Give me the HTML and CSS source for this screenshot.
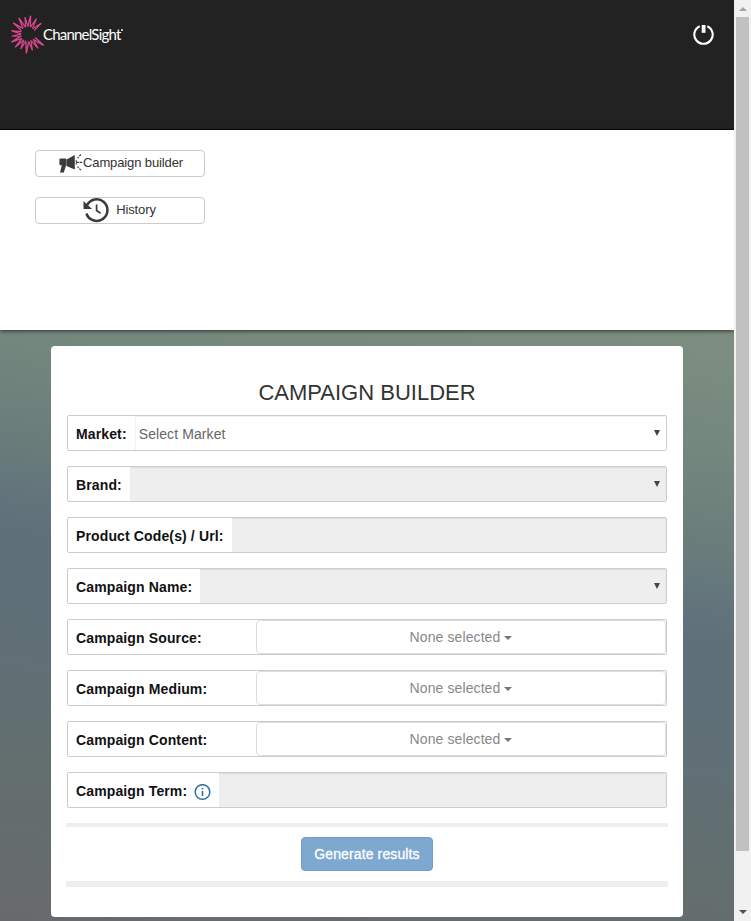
FILE: index.html
```
<!DOCTYPE html>
<html lang="en">
<head>
<meta charset="utf-8">
<title>Campaign builder</title>
<link rel="stylesheet" href="styles.css">
</head>
<body>
<div class="page">
  <header class="topbar">
    <div class="logo">
      <svg class="burst" width="42" height="42" viewBox="-20 -20 42 42">
        <defs><path id="ray" d="M-1.3-7.5L0-18.5L1.3-7.5"/></defs>
        <g fill="none" stroke="#d9468c" stroke-width="1.3">
          <use href="#ray" transform="rotate(8)"/>
          <use href="#ray" transform="rotate(29) scale(.95)"/>
          <use href="#ray" transform="rotate(51) scale(.92)"/>
          <use href="#ray" transform="rotate(126) scale(1.04)"/>
          <use href="#ray" transform="rotate(145) scale(.95)"/>
          <use href="#ray" transform="rotate(165) scale(.92)"/>
          <use href="#ray" transform="rotate(185) scale(1.05)"/>
          <use href="#ray" transform="rotate(206) scale(.9)"/>
          <use href="#ray" transform="rotate(224)"/>
          <use href="#ray" transform="rotate(244)"/>
          <use href="#ray" transform="rotate(262) scale(.88)"/>
          <use href="#ray" transform="rotate(281) scale(.9)"/>
          <use href="#ray" transform="rotate(307)"/>
          <use href="#ray" transform="rotate(330)"/>
          <use href="#ray" transform="rotate(350) scale(.93)"/>
        </g>
      </svg>
      <span class="brand">ChannelSight</span><span class="mark"></span>
    </div>
    <svg class="power" width="22" height="22" viewBox="0 0 22 22">
      <path d="M6.700 2.2A9.2 9.2 0 1 0 14.300 2.2" fill="none" stroke="#fff" stroke-width="2.1"/>
      <path d="M8.700 1h3.8v7.8H8.700z" fill="#fff"/>
    </svg>
  </header>
  <nav class="menu">
    <a class="menu-btn">
      <svg width="24" height="20" viewBox="0 0 24 20" fill="#3b3b3b">
        <path d="M7.500 5.500L15.8 1V15.500L7.500 12zM1.500 4.600H7.200V10.800L4.800 18.500H1L2.800 11.200H1.500Q.4 11.200.4 10V5.800Q.4 4.600 1.500 4.600z"/>
        <path d="M18 8.400h1.800M20.600 8.400h2.600M18.500 4.200L19.600 2.900M20.300 2L22 .5M18.500 12.600L19.600 13.900M20.300 14.700L22 16.200M17 6.200Q18.200 8.300 17 10.600" stroke="#3b3b3b" stroke-width="1.1" fill="none"/>
      </svg><span>Campaign builder</span>
    </a>
    <a class="menu-btn history">
      <svg width="26" height="26" viewBox="0 0 26 26">
        <path d="M4 8.200A10.800 10.800 0 1 1 3.400 16.500" fill="none" stroke="#3b3b3b" stroke-width="2.500"/>
        <path d="M.5 4V12H9z" fill="#3b3b3b"/>
        <path d="M13.600 7.500V13.500L17.600 16.200" fill="none" stroke="#3b3b3b" stroke-width="1.700"/>
      </svg><span>History</span>
    </a>
  </nav>
  <main class="content">
    <section class="card">
      <h1>CAMPAIGN BUILDER</h1>
      <div class="row"><label>Market:</label><div class="field open"><span>Select Market</span><i class="arrow"></i></div></div>
      <div class="row"><label>Brand:</label><div class="field"><i class="arrow"></i></div></div>
      <div class="row"><label>Product Code(s) / Url:</label><div class="field"></div></div>
      <div class="row"><label>Campaign Name:</label><div class="field"><i class="arrow"></i></div></div>
      <div class="row"><label class="wide">Campaign Source:</label><button class="multi">None selected<i class="caret"></i></button></div>
      <div class="row"><label class="wide">Campaign Medium:</label><button class="multi">None selected<i class="caret"></i></button></div>
      <div class="row"><label class="wide">Campaign Content:</label><button class="multi">None selected<i class="caret"></i></button></div>
      <div class="row"><label>Campaign Term:<svg class="info" width="17" height="17" viewBox="0 0 17 17"><circle cx="8.500" cy="8" r="7.300" fill="none" stroke="#2c6ea6" stroke-width="1.500"/><path d="M7.700 4h1.600v1.600H7.700zM7.700 7.100h1.600v5H7.700z" fill="#2c6ea6"/></svg></label><div class="field"></div></div>
      <div class="actions"><button class="generate">Generate results</button></div>
    </section>
  </main>
</div>
<div class="scrollbar"><i class="up"></i><i class="thumb"></i><i class="down"></i></div>
</body>
</html>
```
FILE: styles.css
```
* { box-sizing: border-box; }
body {
  margin: 0;
  width: 751px;
  height: 921px;
  display: flex;
  overflow: hidden;
  font: 14px/20px "Liberation Sans", Arial, sans-serif;
  color: #333;
}
.page { width: 734px; height: 921px; display: flex; flex-direction: column; overflow: hidden; }
.topbar {
  height: 130px;
  background: #222;
  border-bottom: 1px solid #080808;
  display: flex;
  justify-content: space-between;
  align-items: flex-start;
  padding: 14px 19px 0 8px;
}
.logo { display: flex; align-items: flex-start; }
.burst { display: block; }
.brand {
  font: 400 15px/20px Lato, sans-serif;
  color: #fff;
  margin: 10px 0 0 -7px;
  letter-spacing: -0.8px;
}
.mark { width: 2px; height: 2px; margin: 15px 0 0 1px; background: #bbb; }
.power { margin-top: 10px; }
.menu {
  position: relative;
  z-index: 1;
  height: 200px;
  background: #fff;
  padding: 20px 35px;
  display: flex;
  flex-direction: column;
  gap: 20px;
  box-shadow: 0 1px 4px rgba(0, 0, 0, .65);
}
.menu-btn {
  width: 170px;
  height: 27px;
  border: 1px solid #ccc;
  border-radius: 4px;
  display: flex;
  align-items: center;
  justify-content: center;
  font-size: 13px;
  line-height: 18px;
  letter-spacing: -.12px;
  padding-left: 2px;
}
.menu-btn svg { flex: none; }
.menu-btn span { margin-top: -2px; }
.history { gap: 7px; padding: 0 1px 2px 0; }
.history span { margin-top: 0; }
.content {
  flex: 1;
  padding: 16px 51px 4px;
  background: linear-gradient(189deg, #7e8e81 0%, #75887e 16%, #6a7c7a 32%, #65787c 36%, #5f7079 44%, #617077 62%, #636f6f 76%, #676a6c 100%);
}
.card {
  height: 571px;
  background: #fff;
  border-radius: 4px;
  padding: 34px 15px 0;
}
h1 {
  margin: 0 0 10px;
  font-size: 22px;
  line-height: 25px;
  font-weight: 400;
  text-align: center;
}
.row {
  height: 36px;
  margin: 0 1px 15px;
  border: 1px solid #ccc;
  border-radius: 2px;
  display: flex;
}
label {
  padding: 0 8px;
  font-weight: 700;
  line-height: 36px;
  letter-spacing: .13px;
  color: #111;
  white-space: nowrap;
  display: flex;
}
.wide { width: 188px; }
.info { margin: 11px 0 0 7px; }
.field {
  flex: 1;
  background: #eee;
  box-shadow: inset 0 1px 1px rgba(0, 0, 0, .075);
  display: flex;
  align-items: center;
  justify-content: flex-end;
  padding: 0 6px 0 4px;
}
.open { background: #fff; color: #666; justify-content: space-between; letter-spacing: .1px; box-shadow: inset 1px 1px 1px rgba(0, 0, 0, .06); }
.open span { padding-top: 2px; }
.arrow {
  border: solid transparent;
  border-width: 6px 3px 0;
  border-top-color: #444;
}
.multi {
  flex: 1;
  height: 34px;
  border: 1px solid #ddd;
  border-radius: 4px;
  background: #fff;
  color: #888;
  font: 14px/20px "Liberation Sans", Arial, sans-serif;
  letter-spacing: .1px;
  display: flex;
  align-items: center;
  justify-content: center;
  padding: 0;
}
.caret {
  border: solid transparent;
  border-width: 4px 4px 0;
  border-top-color: #777;
  margin: 2px 0 0 4px;
}
.actions {
  height: 64px;
  border-top: 4px solid #eee;
  border-bottom: 6px solid #eee;
  display: flex;
  justify-content: center;
  align-items: flex-start;
  padding-top: 10px;
}
.generate {
  width: 132px;
  height: 34px;
  padding: 0;
  border: 1px solid #729fc9;
  border-radius: 4px;
  background: #7da8d0;
  color: #fff;
  font: 14px/20px "Liberation Sans", Arial, sans-serif;
  letter-spacing: .12px;
  -webkit-text-stroke: .3px #fff;
}
.scrollbar {
  width: 17px;
  height: 921px;
  background: #f1f1f1;
  display: flex;
  flex-direction: column;
  align-items: center;
}
.up { margin-top: 7px; border: solid transparent; border-width: 0 4px 4px; border-bottom-color: #a3a3a3; }
.thumb { width: 13px; height: 834px; margin-top: 6px; background: #c1c1c1; }
.down { margin-top: 59px; border: solid transparent; border-width: 4px 4px 0; border-top-color: #505050; }
```
